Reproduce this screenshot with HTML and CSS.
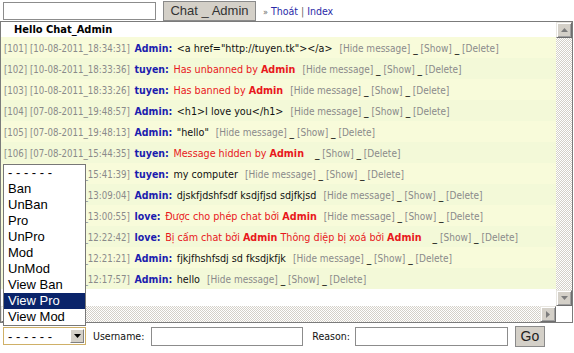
FILE: index.html
```html
<!DOCTYPE html>
<html>
<head>
<meta charset="utf-8">
<link rel="stylesheet" href="styles.css">
</head>
<body>
<div class="top">
  <input class="name-input" type="text">
  <button class="chat-btn">Chat _ Admin</button>
  <span class="nav"><span class="raquo">»</span> <a href="#">Thoát</a> | <a href="#">Index</a></span>
</div>
<div class="chatbox">
  <div class="viewport">
    <div class="hello">Hello Chat_Admin</div>
    <div class="row"><span class="ts">[101] [10-08-2011_18:34:31]</span> <span class="nm">Admin:</span> <span class="msg">&lt;a href="http://tuyen.tk"&gt;&lt;/a&gt;</span><span class="act">[Hide message] <i>_</i> [Show] <i>_</i> [Delete]</span></div>
    <div class="row"><span class="ts">[102] [10-08-2011_18:33:36]</span> <span class="nm">tuyen:</span> <span class="msg sys">Has unbanned by <b>Admin</b></span><span class="act">[Hide message] <i>_</i> [Show] <i>_</i> [Delete]</span></div>
    <div class="row"><span class="ts">[103] [10-08-2011_18:33:26]</span> <span class="nm">tuyen:</span> <span class="msg sys">Has banned by <b>Admin</b></span><span class="act">[Hide message] <i>_</i> [Show] <i>_</i> [Delete]</span></div>
    <div class="row"><span class="ts">[104] [07-08-2011_19:48:57]</span> <span class="nm">Admin:</span> <span class="msg">&lt;h1&gt;I love you&lt;/h1&gt;</span><span class="act">[Hide message] <i>_</i> [Show] <i>_</i> [Delete]</span></div>
    <div class="row"><span class="ts">[105] [07-08-2011_19:48:13]</span> <span class="nm">Admin:</span> <span class="msg">"hello"</span><span class="act">[Hide message] <i>_</i> [Show] <i>_</i> [Delete]</span></div>
    <div class="row"><span class="ts">[106] [07-08-2011_15:44:35]</span> <span class="nm">tuyen:</span> <span class="msg sys">Message hidden by <b>Admin</b></span><span class="act wide"><i>_</i> [Show] <i>_</i> [Delete]</span></div>
    <div class="row"><span class="ts">[107] [07-08-2011_15:41:39]</span> <span class="nm">tuyen:</span> <span class="msg">my computer</span><span class="act">[Hide message] <i>_</i> [Show] <i>_</i> [Delete]</span></div>
    <div class="row"><span class="ts">[108] [07-08-2011_13:09:04]</span> <span class="nm">Admin:</span> <span class="msg">djskfjdshfsdf ksdjfjsd sdjfkjsd</span><span class="act">[Hide message] <i>_</i> [Show] <i>_</i> [Delete]</span></div>
    <div class="row"><span class="ts">[109] [07-08-2011_13:00:55]</span> <span class="nm">love:</span> <span class="msg sys">Được cho phép chat bởi <b>Admin</b></span><span class="act">[Hide message] <i>_</i> [Show] <i>_</i> [Delete]</span></div>
    <div class="row"><span class="ts">[110] [07-08-2011_12:22:42]</span> <span class="nm">love:</span> <span class="msg sys">Bị cấm chat bởi <b>Admin</b> Thông điệp bị xoá bởi <b>Admin</b></span><span class="act wide"><i>_</i> [Show] <i>_</i> [Delete]</span></div>
    <div class="row"><span class="ts">[111] [07-08-2011_12:21:21]</span> <span class="nm">Admin:</span> <span class="msg">fjkjfhshfsdj sd fksdjkfjk</span><span class="act">[Hide message] <i>_</i> [Show] <i>_</i> [Delete]</span></div>
    <div class="row"><span class="ts">[112] [07-08-2011_12:17:57]</span> <span class="nm">Admin:</span> <span class="msg">hello</span><span class="act">[Hide message] <i>_</i> [Show] <i>_</i> [Delete]</span></div>
  </div>
  <div class="vbar">
    <div class="sbtn"><svg width="7" height="4" viewBox="0 0 7 4"><path d="M3.5 0L7 4H0z"/></svg></div>
    <div class="track"></div>
    <div class="sbtn"><svg width="7" height="4" viewBox="0 0 7 4"><path d="M0 0H7L3.5 4z"/></svg></div>
  </div>
  <div class="hbar">
    <div class="sbtn"><svg width="4" height="7" viewBox="0 0 4 7"><path d="M4 0V7L0 3.5z"/></svg></div>
    <div class="track"></div>
    <div class="sbtn"><svg width="4" height="7" viewBox="0 0 4 7"><path d="M0 0L4 3.5L0 7z"/></svg></div>
  </div>
  <div class="corner"></div>
</div>
<div class="bottom">
  <div class="select"><span class="sel-text">- - - - - -</span><span class="sel-btn"><svg width="7" height="4" viewBox="0 0 7 4"><path d="M0 0H7L3.5 4z"/></svg></span></div>
  <span class="lbl user-lbl">Username:</span>
  <input class="field user-field" type="text">
  <span class="lbl reason-lbl">Reason:</span>
  <input class="field reason-field" type="text">
  <button class="go-btn">Go</button>
</div>
<ul class="dropdown">
  <li>- - - - - -</li>
  <li>Ban</li>
  <li>UnBan</li>
  <li>Pro</li>
  <li>UnPro</li>
  <li>Mod</li>
  <li>UnMod</li>
  <li>View Ban</li>
  <li class="active">View Pro</li>
  <li>View Mod</li>
</ul>
</body>
</html>
```
FILE: styles.css
```css
* { box-sizing: border-box; }
html, body { margin: 0; padding: 0; }
body {
  width: 574px;
  height: 353px;
  position: relative;
  overflow: hidden;
  background: #fff;
  font-family: "DejaVu Sans Condensed", "Liberation Sans", sans-serif;
  color: #111;
}

.top {
  display: flex;
  align-items: center;
  height: 21px;
  padding-left: 3px;
}
.name-input {
  width: 153px;
  height: 18px;
  margin: 0;
  padding: 0;
  border: 1px solid #8c8c8c;
  background: #fff;
}
.chat-btn {
  margin: 0 0 0 7px;
  width: 93px;
  height: 20px;
  padding: 0;
  background: #d4d0c8;
  border: 1px solid #8a8a8a;
  font: 13px "Liberation Sans", sans-serif;
  color: #333;
}
.nav {
  margin-left: 7px;
  font-size: 10.5px;
  color: #666;
}
.raquo { font-size: 9px; }
.nav a { color: #2a2aa8; text-decoration: none; }

.chatbox {
  display: grid;
  grid-template-columns: 555px 16px;
  grid-template-rows: 284px 16px;
  width: 573px;
  border: 1px solid #7b7b7b;
}
.viewport {
  overflow: hidden;
  background: #fff;
}
.hello {
  height: 15px;
  padding-left: 13px;
  font-weight: bold;
  font-size: 11px;
  line-height: 15px;
  color: #000;
}
.row {
  height: 21px;
  line-height: 19px;
  padding-left: 3px;
  white-space: nowrap;
  background: #f8fbda;
}
.row:nth-child(odd) { background: #f3f9d8; }
.ts { color: #8a8a8a; font-size: 9.6px; }
.nm { color: #1c1cae; font-weight: bold; font-size: 10.5px; }
.msg { font-size: 10.7px; color: #111; }
.msg.sys { color: #e8181c; }
.msg b { font-weight: bold; }
.act { color: #8a8a8a; font-size: 10px; margin-left: 7px; }
.act.wide { margin-left: 11px; }
.act i { font-style: normal; color: #000; }

.vbar, .hbar { display: flex; }
.vbar { flex-direction: column; }
.hbar { flex-direction: row; }
.track {
  flex: 1;
  background: repeating-conic-gradient(#d4d0c8 0% 25%, #ffffff 0% 50%) 0 0 / 2px 2px;
}
.sbtn {
  width: 16px;
  height: 16px;
  flex: none;
  display: flex;
  align-items: center;
  justify-content: center;
  background: #d4d0c8;
  border: 1px solid;
  border-color: #e8e6e0 #6e6e6e #6e6e6e #e8e6e0;
  box-shadow: inset 1px 1px #fff, inset -1px -1px #a0a0a0;
}
.sbtn svg { fill: #7c7c7c; display: block; }
.corner { background: #fff; }

.bottom {
  display: flex;
  align-items: center;
  height: 24px;
  padding-left: 3px;
  margin-top: 1px;
}
.select {
  width: 83px;
  height: 18px;
  border: 1px solid #cfb067;
  background: #fff;
  display: flex;
  align-items: center;
  justify-content: space-between;
  padding: 0 1px 0 4px;
  font: 13px "Liberation Sans", sans-serif;
  color: #000;
}
.sel-btn {
  width: 14px;
  height: 14px;
  display: flex;
  align-items: center;
  justify-content: center;
  background: #d4d0c8;
  border: 1px solid;
  border-color: #fff #808080 #808080 #fff;
}
.sel-btn svg { fill: #000; display: block; }
.lbl { font-size: 10.5px; color: #111; }
.user-lbl { margin-left: 7px; }
.reason-lbl { margin-left: 9px; }
.field {
  height: 19px;
  margin: 0;
  padding: 0;
  border: 1px solid #8c8c8c;
  background: #fff;
}
.user-field { width: 152px; margin-left: 7px; }
.reason-field { width: 153px; margin-left: 5px; }
.go-btn {
  margin: 0 0 0 7px;
  width: 30px;
  height: 21px;
  padding: 0;
  background: #d4d0c8;
  border: 1px solid #8a8a8a;
  font: 14px "Liberation Sans", sans-serif;
  color: #222;
}

.dropdown {
  position: absolute;
  left: 3px;
  top: 164px;
  width: 83px;
  margin: 0;
  padding: 0;
  list-style: none;
  background: #fff;
  border: 1px solid #777;
  font: 13px "Liberation Sans", sans-serif;
  color: #000;
}
.dropdown li {
  height: 16px;
  line-height: 16px;
  padding-left: 4px;
  white-space: nowrap;
}
.dropdown li.active { background: #0a246a; color: #fff; }
```
